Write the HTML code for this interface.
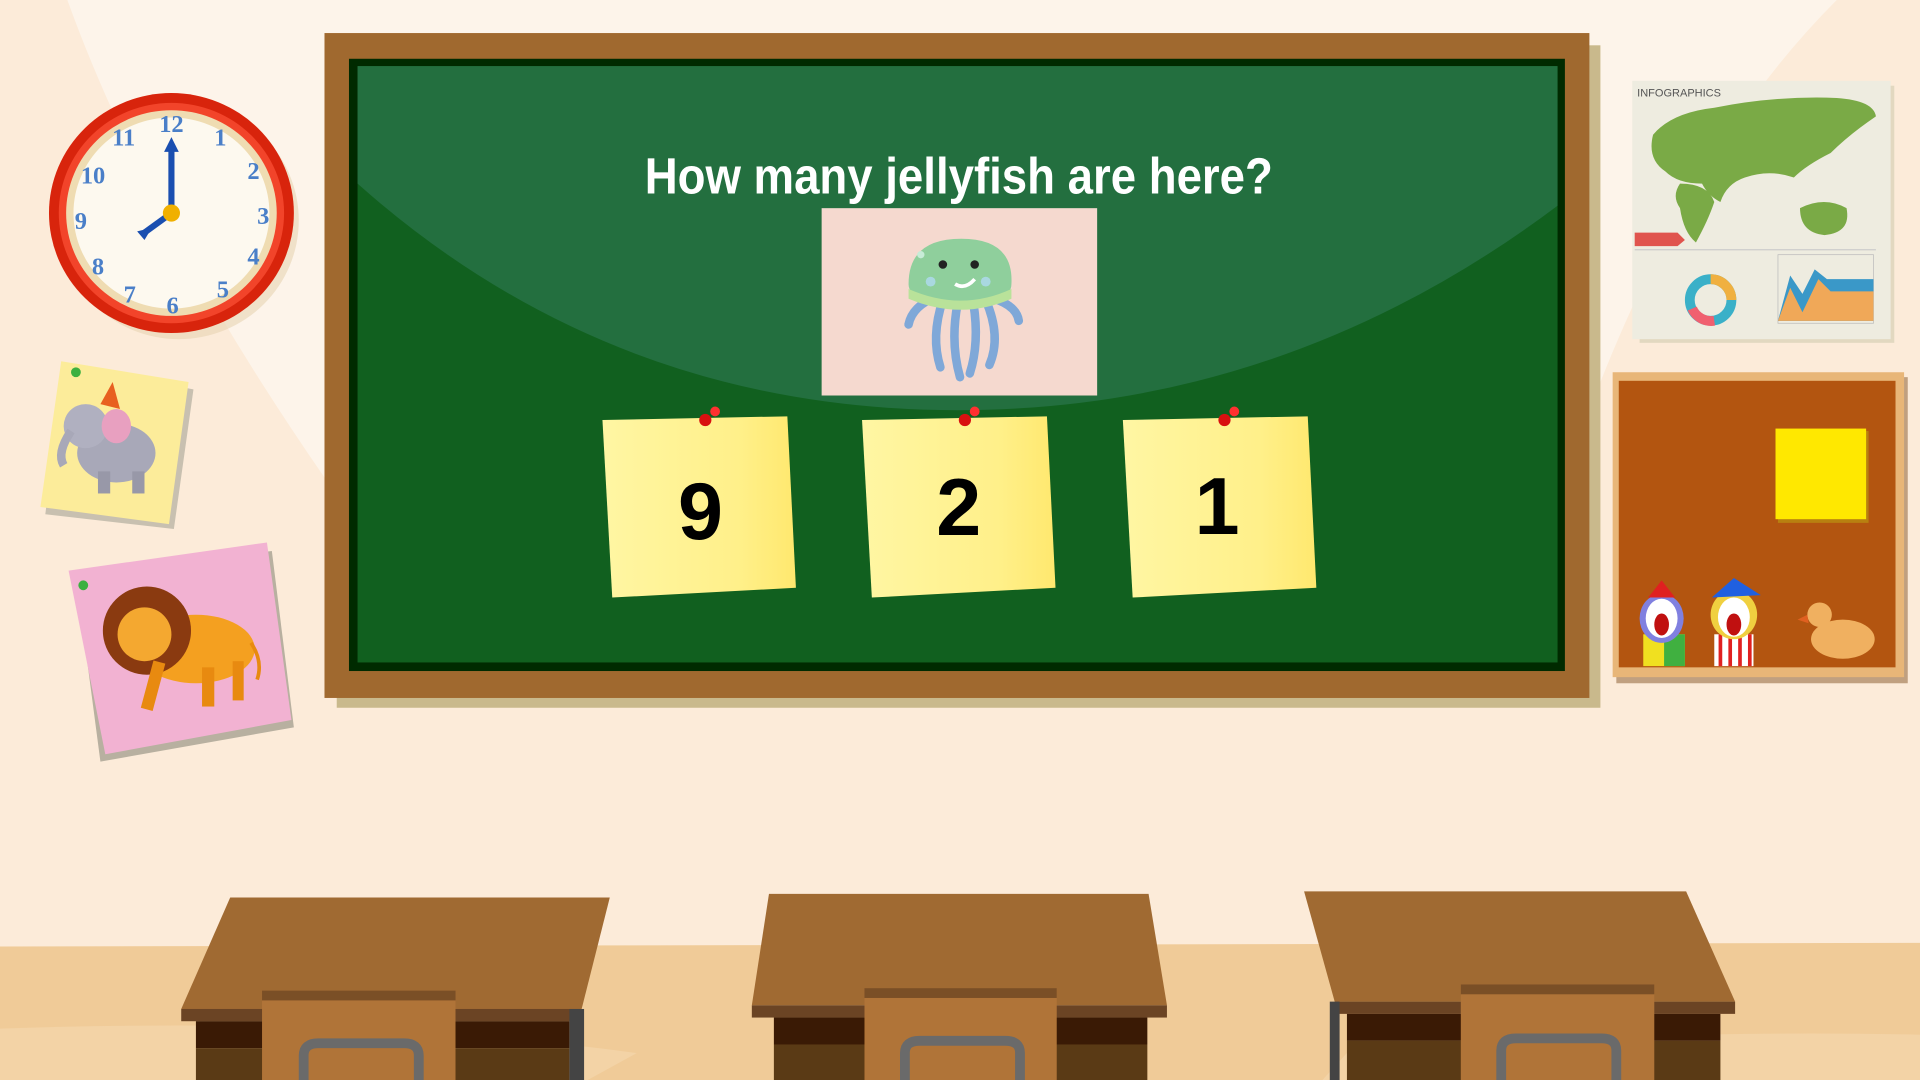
<!DOCTYPE html>
<html><head><meta charset="utf-8"><style>
html,body{margin:0;padding:0;width:1920px;height:1080px;overflow:hidden;background:#fcebd8}
svg{display:block}
</style></head><body>
<svg width="1920" height="1080" viewBox="0 0 1568 882" xmlns="http://www.w3.org/2000/svg">
<defs>
<linearGradient id="note" x1="0" x2="1" y1="0" y2="0"><stop offset="0" stop-color="#fff6a3"/><stop offset="0.7" stop-color="#fff08a"/><stop offset="1" stop-color="#ffe86e"/></linearGradient>
</defs>
<rect width="1568" height="882" fill="#fcebd9"/>
<path d="M55 0 Q120 180 265 390 L265 27 L1298 27 L1300 330 Q1380 120 1500 0 Z" fill="#fdf4ea"/>
<path d="M0 773 L1568 770 L1568 882 L0 882 Z" fill="#f0cb98"/>
<path d="M0 840 Q300 830 520 860 L480 882 L0 882 Z" fill="#f3d3a6"/>
<path d="M1100 860 Q1350 840 1568 845 L1568 882 L1080 882 Z" fill="#f3d3a6"/>

<rect x="275" y="37" width="1032" height="541" fill="#c9b98c"/>
<rect x="265" y="27" width="1033" height="543" fill="#a0692f"/>
<rect x="285" y="48" width="993" height="500" fill="#002a00"/>
<rect x="292" y="54" width="980" height="487" fill="#11601f"/>
<path d="M292 54 L1272 54 L1272 168 Q1050 335 782 335 Q500 335 292 150 Z" fill="#236f3f"/>
<text x="783" y="158" text-anchor="middle" fill="#fff" font-family="'Liberation Sans Narrow','Liberation Sans',sans-serif" font-weight="bold" font-size="42" textLength="513" lengthAdjust="spacingAndGlyphs">How many jellyfish are here?</text>

<rect x="671" y="170" width="225" height="153" fill="#f5d9cf"/>
<g fill="none" stroke="#7fa8d8" stroke-width="7" stroke-linecap="round">
<path d="M765 242 Q745 250 742 265"/>
<path d="M805 242 Q830 248 832 262"/>
<path d="M770 245 Q760 275 768 300"/>
<path d="M782 248 Q776 280 784 308"/>
<path d="M795 248 Q800 280 792 305"/>
<path d="M805 245 Q818 275 808 298"/>
</g>
<path d="M742 232 Q742 195 785 195 Q828 195 826 232 Q826 248 785 248 Q742 248 742 232 Z" fill="#8fcf9c"/>
<path d="M742 236 Q785 255 826 236 L826 244 Q785 262 742 244 Z" fill="#b9e29a"/>
<circle cx="770" cy="216" r="3.5" fill="#222"/><circle cx="796" cy="216" r="3.5" fill="#222"/>
<path d="M780 232 Q788 237 796 228" stroke="#fff" stroke-width="3" fill="none"/>
<circle cx="760" cy="230" r="4" fill="#a9d8e0"/><circle cx="805" cy="230" r="4" fill="#a9d8e0"/>
<circle cx="752" cy="208" r="3" fill="#c7ecd7"/>

<g>
<path d="M492 343 L643 340 L650 480 L500 488 Z" fill="url(#note)"/>
<path d="M704 343 L855 340 L862 480 L712 488 Z" fill="url(#note)"/>
<path d="M917 343 L1068 340 L1075 480 L925 488 Z" fill="url(#note)"/>
<circle cx="576" cy="343" r="5" fill="#d81010"/><circle cx="584" cy="336" r="4" fill="#ff3030"/>
<circle cx="788" cy="343" r="5" fill="#d81010"/><circle cx="796" cy="336" r="4" fill="#ff3030"/>
<circle cx="1000" cy="343" r="5" fill="#d81010"/><circle cx="1008" cy="336" r="4" fill="#ff3030"/>
<g font-family="'Liberation Sans',sans-serif" font-weight="bold" font-size="66" fill="#000" text-anchor="middle">
<text x="572" y="440">9</text><text x="783" y="437">2</text><text x="994" y="436">1</text>
</g>
</g>

<ellipse cx="146" cy="180" rx="98" ry="97" fill="#e8d3b2" opacity="0.6"/>
<ellipse cx="140" cy="174" rx="100" ry="98" fill="#d8240c"/>
<ellipse cx="140" cy="174" rx="92" ry="90" fill="#f2442a"/>
<ellipse cx="140" cy="174" rx="86" ry="84" fill="#efdcb2"/>
<ellipse cx="140" cy="174" rx="80" ry="78" fill="#fdf9ef"/>
<g font-family="'Liberation Serif',serif" font-size="20" fill="#4a7fc8" font-weight="bold" text-anchor="middle">
<text x="140" y="108">12</text><text x="180" y="119">1</text><text x="207" y="146">2</text><text x="215" y="183">3</text><text x="207" y="216">4</text><text x="182" y="243">5</text><text x="141" y="256">6</text><text x="106" y="247">7</text><text x="80" y="224">8</text><text x="66" y="187">9</text><text x="76" y="150">10</text><text x="101" y="119">11</text>
</g>
<path d="M140 174 L140 122" stroke="#1a4fb0" stroke-width="5"/>
<path d="M134 124 L140 112 L146 124 Z" fill="#1a4fb0"/>
<path d="M140 174 L118 190" stroke="#1a4fb0" stroke-width="5"/>
<path d="M112 189 L118 196 L124 186 Z" fill="#1a4fb0"/>
<circle cx="140" cy="174" r="7" fill="#f0b000"/>

<path d="M37 420 L142 432 L158 318 L52 298 Z" fill="#c8c0b0"/>
<path d="M33 414 L138 428 L154 312 L50 295 Z" fill="#fcec9a"/>
<ellipse cx="95" cy="370" rx="32" ry="24" fill="#a8a8b8"/>
<circle cx="70" cy="348" r="18" fill="#b0b0c0"/>
<ellipse cx="95" cy="348" rx="12" ry="14" fill="#e8a0c0"/>
<path d="M58 352 Q46 370 52 380" stroke="#a8a8b8" stroke-width="7" fill="none"/>
<path d="M82 330 L92 312 L98 334 Z" fill="#e86020"/>
<rect x="80" y="385" width="10" height="18" fill="#9898a8"/><rect x="108" y="385" width="10" height="18" fill="#9898a8"/>
<circle cx="62" cy="304" r="4" fill="#3cb040"/>

<path d="M82 622 L240 594 L222 450 L62 470 Z" fill="#b8b0a0"/>
<path d="M86 616 L238 588 L218 443 L56 466 Z" fill="#f2b2d2"/>
<ellipse cx="160" cy="530" rx="48" ry="28" fill="#f4a020"/>
<circle cx="120" cy="515" r="36" fill="#8a3a10"/>
<circle cx="118" cy="518" r="22" fill="#f4a830"/>
<rect x="120" y="540" width="10" height="40" fill="#e88a10" transform="rotate(15 125 560)"/>
<rect x="165" y="545" width="10" height="32" fill="#e88a10"/>
<rect x="190" y="540" width="9" height="32" fill="#e88a10"/>
<path d="M205 525 Q215 540 210 555" stroke="#e88a10" stroke-width="3" fill="none"/>
<circle cx="68" cy="478" r="4" fill="#3cb040"/>

<rect x="1339" y="70" width="208" height="210" fill="#e2d8c0"/>
<rect x="1333" y="66" width="211" height="211" fill="#eeece0"/>
<text x="1337" y="79" font-family="'Liberation Sans',sans-serif" font-size="9" fill="#555">INFOGRAPHICS</text>
<path d="M1350 110 Q1365 92 1400 88 Q1450 78 1500 80 Q1530 82 1532 95 Q1510 110 1495 125 Q1475 135 1465 145 Q1445 138 1425 145 Q1410 150 1405 165 Q1395 160 1390 150 Q1370 150 1360 140 Q1345 130 1350 110 Z" fill="#7aaa46"/>
<path d="M1372 150 Q1395 150 1400 165 Q1395 180 1385 198 Q1375 190 1372 170 Q1365 160 1372 150 Z" fill="#7aaa46"/>
<path d="M1470 170 Q1490 160 1508 170 Q1512 190 1490 192 Q1470 190 1470 170 Z" fill="#7aaa46"/>
<path d="M1335 190 L1370 190 L1376 196 L1370 201 L1335 201 Z" fill="#e0544e"/>
<line x1="1335" y1="204" x2="1532" y2="204" stroke="#ccc"/>
<circle cx="1397" cy="245" r="17" fill="none" stroke="#3ab0c8" stroke-width="8"/>
<path d="M1397 228 A17 17 0 0 1 1414 245" stroke="#f0b040" stroke-width="8" fill="none"/>
<path d="M1400 262 A17 17 0 0 1 1382 252" stroke="#f06070" stroke-width="8" fill="none"/>
<rect x="1452" y="208" width="78" height="56" fill="none" stroke="#bbb" stroke-width="0.6"/>
<path d="M1452 262 L1462 225 L1472 240 L1482 220 L1492 228 L1530 228 L1530 262 Z" fill="#3a98c8"/>
<path d="M1452 262 L1462 235 L1472 255 L1485 228 L1495 238 L1530 238 L1530 262 Z" fill="#f0a858"/>

<rect x="1320" y="308" width="238" height="250" fill="#c0a080"/>
<rect x="1317" y="304" width="238" height="249" fill="#e8b678"/>
<rect x="1322" y="311" width="226" height="234" fill="#b35510"/>
<rect x="1452" y="352" width="74" height="75" fill="#b88010"/>
<rect x="1450" y="350" width="74" height="74" fill="#ffe800"/>
<rect x="1342" y="518" width="34" height="26" fill="#f0e020"/>
<rect x="1359" y="518" width="17" height="26" fill="#40b040"/>
<ellipse cx="1357" cy="505" rx="18" ry="20" fill="#8080e0"/>
<ellipse cx="1357" cy="505" rx="13" ry="16" fill="#fff"/>
<ellipse cx="1357" cy="510" rx="6" ry="9" fill="#c01010"/>
<path d="M1346 488 L1357 474 L1368 488 Z" fill="#e02020"/>
<rect x="1400" y="518" width="32" height="26" fill="#fff"/>
<g stroke="#e02020" stroke-width="3"><line x1="1405" y1="518" x2="1405" y2="544"/><line x1="1413" y1="518" x2="1413" y2="544"/><line x1="1421" y1="518" x2="1421" y2="544"/><line x1="1429" y1="518" x2="1429" y2="544"/></g>
<ellipse cx="1416" cy="502" rx="19" ry="20" fill="#f0d040"/>
<ellipse cx="1416" cy="504" rx="13" ry="16" fill="#fff"/>
<ellipse cx="1416" cy="510" rx="6" ry="9" fill="#c01010"/>
<path d="M1398 488 L1416 472 L1438 486 Z" fill="#2060e0"/>
<ellipse cx="1505" cy="522" rx="26" ry="16" fill="#f0b060"/>
<circle cx="1486" cy="502" r="10" fill="#f0b060"/>
<path d="M1476 502 L1468 506 L1477 509 Z" fill="#e06020"/>

<g>
<path d="M188 733 L498 733 L475 824 L148 824 Z" fill="#a06a32"/>
<rect x="148" y="824" width="327" height="10" fill="#6b4424"/>
<rect x="160" y="834" width="305" height="22" fill="#3a1a05"/>
<rect x="160" y="856" width="305" height="26" fill="#5a3a15"/>
<rect x="465" y="824" width="12" height="58" fill="#444"/>
<rect x="214" y="809" width="158" height="73" fill="#b07438"/>
<rect x="214" y="809" width="158" height="8" fill="#7a4f26"/>
<path d="M248 882 L248 862 Q248 852 260 852 L330 852 Q342 852 342 862 L342 882" stroke="#6a6a6a" stroke-width="8" fill="none"/>

<path d="M628 730 L938 730 L953 821 L614 821 Z" fill="#a06a32"/>
<rect x="614" y="821" width="339" height="10" fill="#6b4424"/>
<rect x="632" y="831" width="305" height="22" fill="#3a1a05"/>
<rect x="632" y="853" width="305" height="29" fill="#5a3a15"/>
<rect x="706" y="807" width="157" height="75" fill="#b07438"/>
<rect x="706" y="807" width="157" height="8" fill="#7a4f26"/>
<path d="M739 882 L739 860 Q739 850 751 850 L821 850 Q833 850 833 860 L833 882" stroke="#6a6a6a" stroke-width="8" fill="none"/>

<path d="M1065 728 L1377 728 L1417 818 L1090 818 Z" fill="#a06a32"/>
<rect x="1090" y="818" width="327" height="10" fill="#6b4424"/>
<rect x="1100" y="828" width="305" height="22" fill="#3a1a05"/>
<rect x="1100" y="850" width="305" height="32" fill="#5a3a15"/>
<rect x="1086" y="818" width="8" height="64" fill="#444"/>
<rect x="1193" y="804" width="158" height="78" fill="#b07438"/>
<rect x="1193" y="804" width="158" height="8" fill="#7a4f26"/>
<path d="M1226 882 L1226 858 Q1226 848 1238 848 L1308 848 Q1320 848 1320 858 L1320 882" stroke="#6a6a6a" stroke-width="8" fill="none"/>
</g>
</svg>
</body></html>
